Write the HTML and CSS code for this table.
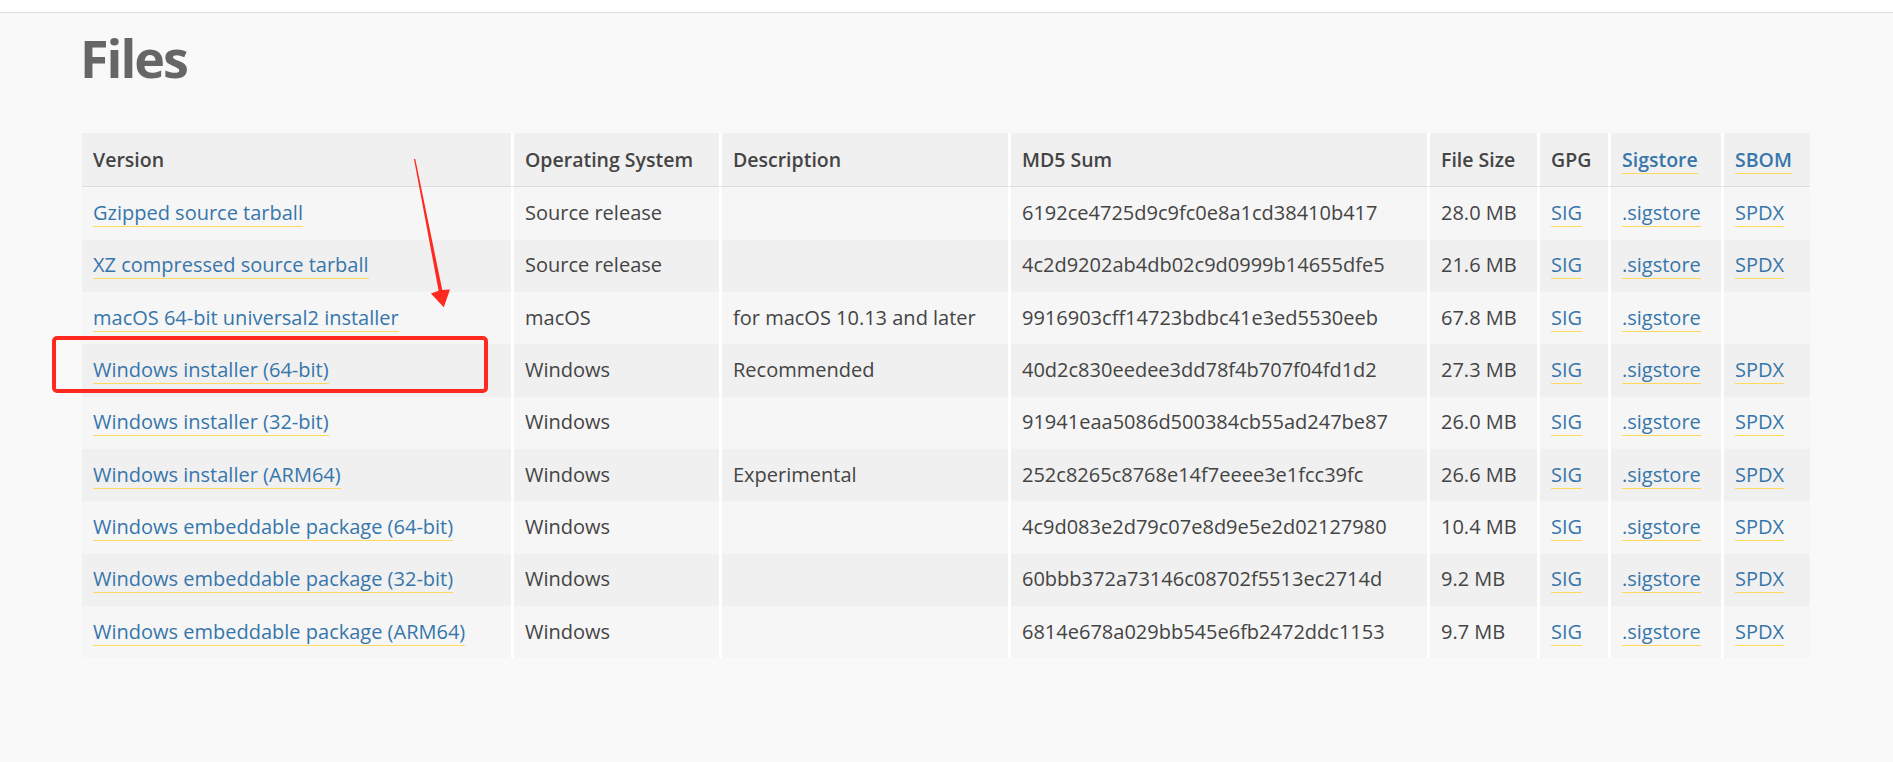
FILE: index.html
```html
<!DOCTYPE html>
<html lang="en">
<head>
<meta charset="utf-8">
<title>Files</title>
<link rel="stylesheet" href="styles.css">
</head>
<body>
<header class="topbar"></header>
<main class="content">
  <h1 class="title">Files</h1>
  <table class="files">
    <colgroup>
      <col class="c-version">
      <col class="c-os">
      <col class="c-desc">
      <col class="c-md5">
      <col class="c-size">
      <col class="c-gpg">
      <col class="c-sig">
      <col class="c-sbom">
    </colgroup>
    <thead>
      <tr>
        <th>Version</th>
        <th>Operating System</th>
        <th>Description</th>
        <th>MD5 Sum</th>
        <th>File Size</th>
        <th>GPG</th>
        <th><a href="#">Sigstore</a></th>
        <th><a href="#">SBOM</a></th>
      </tr>
    </thead>
    <tbody>
      <tr>
        <td><a href="#">Gzipped source tarball</a></td>
        <td>Source release</td>
        <td></td>
        <td>6192ce4725d9c9fc0e8a1cd38410b417</td>
        <td>28.0 MB</td>
        <td><a href="#">SIG</a></td>
        <td><a href="#">.sigstore</a></td>
        <td><a href="#">SPDX</a></td>
      </tr>
      <tr>
        <td><a href="#">XZ compressed source tarball</a></td>
        <td>Source release</td>
        <td></td>
        <td>4c2d9202ab4db02c9d0999b14655dfe5</td>
        <td>21.6 MB</td>
        <td><a href="#">SIG</a></td>
        <td><a href="#">.sigstore</a></td>
        <td><a href="#">SPDX</a></td>
      </tr>
      <tr>
        <td><a href="#">macOS 64-bit universal2 installer</a></td>
        <td>macOS</td>
        <td>for macOS 10.13 and later</td>
        <td>9916903cff14723bdbc41e3ed5530eeb</td>
        <td>67.8 MB</td>
        <td><a href="#">SIG</a></td>
        <td><a href="#">.sigstore</a></td>
        <td></td>
      </tr>
      <tr>
        <td><a href="#">Windows installer (64-bit)</a></td>
        <td>Windows</td>
        <td>Recommended</td>
        <td>40d2c830eedee3dd78f4b707f04fd1d2</td>
        <td>27.3 MB</td>
        <td><a href="#">SIG</a></td>
        <td><a href="#">.sigstore</a></td>
        <td><a href="#">SPDX</a></td>
      </tr>
      <tr>
        <td><a href="#">Windows installer (32-bit)</a></td>
        <td>Windows</td>
        <td></td>
        <td>91941eaa5086d500384cb55ad247be87</td>
        <td>26.0 MB</td>
        <td><a href="#">SIG</a></td>
        <td><a href="#">.sigstore</a></td>
        <td><a href="#">SPDX</a></td>
      </tr>
      <tr>
        <td><a href="#">Windows installer (ARM64)</a></td>
        <td>Windows</td>
        <td>Experimental</td>
        <td>252c8265c8768e14f7eeee3e1fcc39fc</td>
        <td>26.6 MB</td>
        <td><a href="#">SIG</a></td>
        <td><a href="#">.sigstore</a></td>
        <td><a href="#">SPDX</a></td>
      </tr>
      <tr>
        <td><a href="#">Windows embeddable package (64-bit)</a></td>
        <td>Windows</td>
        <td></td>
        <td>4c9d083e2d79c07e8d9e5e2d02127980</td>
        <td>10.4 MB</td>
        <td><a href="#">SIG</a></td>
        <td><a href="#">.sigstore</a></td>
        <td><a href="#">SPDX</a></td>
      </tr>
      <tr>
        <td><a href="#">Windows embeddable package (32-bit)</a></td>
        <td>Windows</td>
        <td></td>
        <td>60bbb372a73146c08702f5513ec2714d</td>
        <td>9.2 MB</td>
        <td><a href="#">SIG</a></td>
        <td><a href="#">.sigstore</a></td>
        <td><a href="#">SPDX</a></td>
      </tr>
      <tr>
        <td><a href="#">Windows embeddable package (ARM64)</a></td>
        <td>Windows</td>
        <td></td>
        <td>6814e678a029bb545e6fb2472ddc1153</td>
        <td>9.7 MB</td>
        <td><a href="#">SIG</a></td>
        <td><a href="#">.sigstore</a></td>
        <td><a href="#">SPDX</a></td>
      </tr>
    </tbody>
  </table>
</main>
<svg class="annotation" width="1893" height="762" viewBox="0 0 1893 762" aria-hidden="true">
  <polygon class="arrow" points="414,159 415.3,159 442.3,290 450,289.6 443.8,307.2 430.9,293.4 438.6,290.8"/>
  <rect class="highlight" x="54" y="338" width="432" height="53" rx="3" ry="3"/>
</svg>
</body>
</html>
```

FILE: styles.css
```css
html {
  background: #f9f9f9;
}

body {
  margin: 0;
  font-family: "Open Sans", "Noto Sans", "Liberation Sans", sans-serif;
  color: #444;
}

.topbar {
  height: 12px;
  background: #fff;
  border-bottom: 1px solid #dedede;
}

.content {
  padding: 0 0 0 82px;
}

.title {
  margin: 14px 0 44px -2px;
  font-size: 52px;
  line-height: 1.2;
  font-weight: 700;
  letter-spacing: -2px;
  color: #666;
}

.files {
  border-collapse: separate;
  border-spacing: 0;
  table-layout: fixed;
  width: 1728px;
  font-size: 20px;
  line-height: 26px;
}

.c-version { width: 429px; }
.c-os { width: 208px; }
.c-desc { width: 289px; }
.c-md5 { width: 419px; }
.c-size { width: 110px; }
.c-gpg { width: 71px; }
.c-sig { width: 113px; }
.c-sbom { width: 89px; }

.files th,
.files td {
  padding: 0 0 0 11px;
  text-align: left;
  vertical-align: middle;
  white-space: nowrap;
  overflow: hidden;
}

.files th + th,
.files td + td {
  border-left: 3px solid #fff;
}

.files thead tr {
  height: 54px;
}

.files th {
  background: #f0f0f0;
  font-size: 19.5px;
  font-weight: 600;
  color: #444;
  border-bottom: 1px solid #dcdcdc;
}

.files tbody tr {
  height: 52.33px;
}

.files td {
  padding-bottom: 1px;
}

.files tbody tr:nth-child(odd) td {
  background: #f6f6f6;
}

.files tbody tr:nth-child(even) td {
  background: #f0f0f0;
}

.files a {
  color: #3776ab;
  text-decoration: none;
  border-bottom: 1px solid #ffd95a;
}

.annotation {
  position: absolute;
  top: 0;
  left: 0;
  pointer-events: none;
}

.arrow {
  fill: #ff2a1f;
}

.highlight {
  fill: none;
  stroke: #ff2a1f;
  stroke-width: 4;
}
```
